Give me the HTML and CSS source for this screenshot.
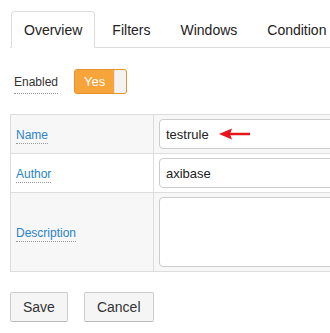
FILE: index.html
```html
<!DOCTYPE html>
<html lang="en">
<head>
    <meta charset="UTF-8">
    <title>Rule Editor</title>
    <link rel="stylesheet" href="styles.css">
</head>
<body>

    <ul class="tabs">
        <li class="tab active">Overview</li>
        <li class="tab">Filters</li>
        <li class="tab">Windows</li>
        <li class="tab">Condition</li>
    </ul>

    <div class="enabled-row">
        <span class="enabled-label">Enabled</span>
        <div class="toggle">
            <span class="toggle-on">Yes</span>
            <span class="toggle-knob"></span>
        </div>
    </div>

    <table class="rule-table">
        <tr class="odd">
            <td class="label-cell"><span class="field-label">Name</span></td>
            <td class="value-cell">
                <div class="field-box">
                    <span class="field-text">testrule</span>
                    <svg class="arrow" width="32" height="12" viewBox="0 0 32 12">
                        <path d="M10 6 H31" stroke="#e8141b" stroke-width="2.5"/>
                        <path d="M0 6 L13 0.5 L11 6 L13 11.5 Z" fill="#e8141b"/>
                    </svg>
                </div>
            </td>
        </tr>
        <tr>
            <td class="label-cell"><span class="field-label">Author</span></td>
            <td class="value-cell">
                <div class="field-box"><span class="field-text">axibase</span></div>
            </td>
        </tr>
        <tr class="odd">
            <td class="label-cell"><span class="field-label">Description</span></td>
            <td class="value-cell">
                <div class="field-box textarea"></div>
            </td>
        </tr>
    </table>

    <div class="actions">
        <button class="btn">Save</button>
        <button class="btn">Cancel</button>
    </div>

</body>
</html>
```

FILE: styles.css
```css
body {
    font-family: 'Liberation Sans', Arial, sans-serif;
    background-color: #fff;
    color: #333;
    margin: 0;
    padding: 11px 0 0 10px;
    overflow: hidden;
}

.tabs {
    list-style: none;
    margin: 0;
    padding: 0 0 0 1px;
    display: flex;
    width: 480px;
    border-bottom: 1px solid #ddd;
}

.tab {
    font-size: 14px;
    line-height: 20px;
    padding: 8px 12px 7px;
    margin-right: 4px;
    margin-bottom: -1px;
    border: 1px solid transparent;
    border-radius: 4px 4px 0 0;
    color: #222;
}

.tab.active {
    border-color: #ddd;
    border-bottom-color: #fff;
    background-color: #fff;
}

.enabled-row {
    display: flex;
    align-items: center;
    margin-top: 21px;
    padding-left: 4px;
}

.enabled-label {
    font-size: 12px;
    line-height: 14px;
    color: #333;
    padding-top: 4px;
    padding-bottom: 4px;
    border-bottom: 1px dotted #999;
    margin-top: 2px;
}

.toggle {
    display: flex;
    margin-left: 16px;
    width: 53px;
    height: 25px;
    box-sizing: border-box;
    border: 1px solid #e8922a;
    border-radius: 3px;
    background-color: #f7a43a;
    overflow: hidden;
}

.toggle-on {
    flex: 1;
    text-align: center;
    color: #fff;
    font-size: 13px;
    line-height: 23px;
}

.toggle-knob {
    width: 11px;
    background-color: #f2f2f2;
    border-left: 1px solid #e0e0e0;
}

.rule-table {
    margin-top: 20px;
    border-collapse: collapse;
    width: 480px;
}

.rule-table td {
    border: 1px solid #ddd;
    padding: 4px 5px;
    vertical-align: middle;
}

.rule-table tr.odd td {
    background-color: #f7f7f7;
}

.label-cell {
    width: 132px;
}

.field-label {
    font-size: 12px;
    color: #2a83cc;
    border-bottom: 1px dotted #999;
    padding-bottom: 1px;
}

.field-box {
    height: 30px;
    box-sizing: border-box;
    border: 1px solid #ccc;
    border-radius: 4px;
    background-color: #fff;
    display: flex;
    align-items: center;
    padding-left: 6px;
}

.field-box.textarea {
    height: 70px;
}

.field-text {
    font-size: 13px;
    color: #222;
}

.arrow {
    margin-left: 10px;
}

.actions {
    display: flex;
    gap: 16px;
    margin-top: 20px;
}

.btn {
    font-family: inherit;
    font-size: 14px;
    color: #333;
    height: 30px;
    padding: 0 12px;
    background-color: #f5f5f5;
    border: 1px solid #ccc;
    border-bottom-color: #bbb;
    border-radius: 2px;
}
```
